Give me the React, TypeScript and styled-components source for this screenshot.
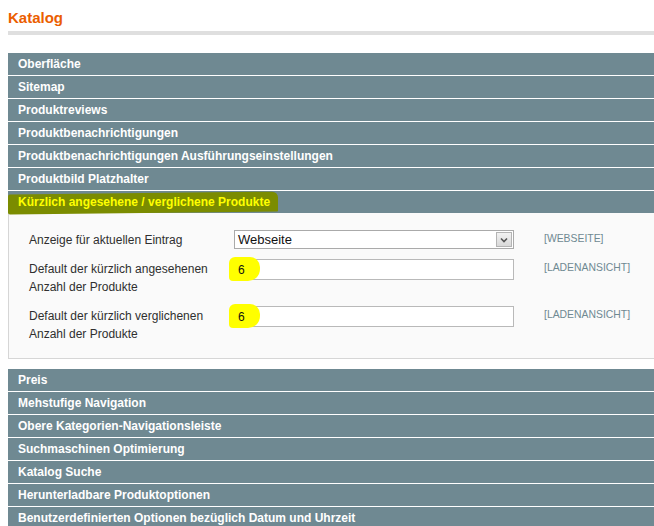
import { createGlobalStyle } from "styled-components";
import styled from "styled-components";

const GlobalStyle = createGlobalStyle`
  html, body {
    margin: 0;
    padding: 0;
    background: #ffffff;
    overflow: hidden;
  }
  body {
    font-family: "Liberation Sans", Arial, sans-serif;
    font-size: 12px;
    color: #2f2f2f;
  }
`;

const Page = styled.div`
  padding: 7px 0 0 8px;
  width: 670px;
`;

const Title = styled.h3`
  margin: 0;
  padding: 2px 0 4px;
  font-size: 15px;
  line-height: 18px;
  font-weight: bold;
  color: #eb5e00;
  border-bottom: 4px solid #dfdfdf;
`;

const Sections = styled.div`
  margin-top: 18px;
  display: flex;
  flex-direction: column;
`;

const SectionHead = styled.div<{ $open?: boolean }>`
  height: 22px;
  margin-bottom: ${({ $open }) => ($open ? "0" : "1px")};
  background: #6f8992;
  display: flex;
  align-items: center;
  padding-left: 10px;
  color: #ffffff;
  font-weight: bold;
  font-size: 12px;
  position: relative;
`;

const Marker = styled.span`
  position: absolute;
  left: 0;
  top: 2px;
  width: 270px;
  height: 20px;
  background: #7b8c00;
  border-radius: 2px 6px 1px 2px;
  transform: skewY(-0.6deg);
`;

const HeadText = styled.span<{ $hl?: boolean }>`
  position: relative;
  color: ${({ $hl }) => ($hl ? "#ffff00" : "#ffffff")};
`;

const Fieldset = styled.div`
  background: #fafafa;
  border: 1px solid #d6d6d6;
  border-top: 0;
  padding: 12px 0 10px 20px;
  margin-bottom: 10px;
`;

const FormRow = styled.div`
  display: grid;
  grid-template-columns: 205px 280px 30px auto;
  padding: 5px 0;
  align-items: start;
`;

const Label = styled.div`
  line-height: 18px;
  padding-top: 1px;
  color: #2f2f2f;
`;

const Scope = styled.div`
  grid-column: 4;
  font-size: 10.4px;
  color: #6f8992;
  padding-top: 3px;
`;

const Select = styled.div`
  height: 19px;
  box-sizing: border-box;
  border: 1px solid #aaaaaa;
  background: #ffffff;
  display: flex;
  align-items: center;
  padding-left: 3px;
  font-size: 13px;
  color: #111111;
`;

const SelectValue = styled.span`
  flex: 1;
`;

const SelectArrow = styled.span`
  width: 16px;
  height: 15px;
  margin-right: 1px;
  box-sizing: border-box;
  border: 1px solid #b4b4b4;
  background: linear-gradient(#f2f2f2, #d9d9d9);
  display: flex;
  align-items: center;
  justify-content: center;
`;

const Input = styled.div`
  height: 21px;
  box-sizing: border-box;
  border: 1px solid #b9b9b9;
  background: #ffffff;
  display: flex;
  align-items: center;
  padding-left: 3px;
  font-size: 12px;
  color: #111111;
  position: relative;
`;

const InputMark = styled.span`
  position: absolute;
  left: -6px;
  top: -3px;
  width: 31px;
  height: 24px;
  background: #ffff00;
  border-radius: 6px 10px 12px 4px;
`;

const InputValue = styled.span`
  position: relative;
`;

const topSections = [
  "Oberfläche",
  "Sitemap",
  "Produktreviews",
  "Produktbenachrichtigungen",
  "Produktbenachrichtigungen Ausführungseinstellungen",
  "Produktbild Platzhalter",
];

const bottomSections = [
  "Preis",
  "Mehstufige Navigation",
  "Obere Kategorien-Navigationsleiste",
  "Suchmaschinen Optimierung",
  "Katalog Suche",
  "Herunterladbare Produktoptionen",
  "Benutzerdefinierten Optionen bezüglich Datum und Uhrzeit",
];

const Chevron = () => (
  <svg width="8" height="6" viewBox="0 0 8 6">
    <path d="M1 1.5 L4 4.5 L7 1.5" fill="none" stroke="#555" strokeWidth="1.6" />
  </svg>
);

const App = () => (
  <>
    <GlobalStyle />
    <Page>
      <Title>Katalog</Title>
      <Sections>
        {topSections.map((s) => (
          <SectionHead key={s}>
            <HeadText>{s}</HeadText>
          </SectionHead>
        ))}
        <SectionHead $open>
          <Marker />
          <HeadText $hl>Kürzlich angesehene / verglichene Produkte</HeadText>
        </SectionHead>
        <Fieldset>
          <FormRow>
            <Label>Anzeige für aktuellen Eintrag</Label>
            <Select>
              <SelectValue>Webseite</SelectValue>
              <SelectArrow>
                <Chevron />
              </SelectArrow>
            </Select>
            <Scope>[WEBSEITE]</Scope>
          </FormRow>
          <FormRow>
            <Label>
              Default der kürzlich angesehenen
              <br />
              Anzahl der Produkte
            </Label>
            <Input>
              <InputMark />
              <InputValue>6</InputValue>
            </Input>
            <Scope>[LADENANSICHT]</Scope>
          </FormRow>
          <FormRow>
            <Label>
              Default der kürzlich verglichenen
              <br />
              Anzahl der Produkte
            </Label>
            <Input>
              <InputMark />
              <InputValue>6</InputValue>
            </Input>
            <Scope>[LADENANSICHT]</Scope>
          </FormRow>
        </Fieldset>
        {bottomSections.map((s) => (
          <SectionHead key={s}>
            <HeadText>{s}</HeadText>
          </SectionHead>
        ))}
      </Sections>
    </Page>
  </>
);

export default App;
